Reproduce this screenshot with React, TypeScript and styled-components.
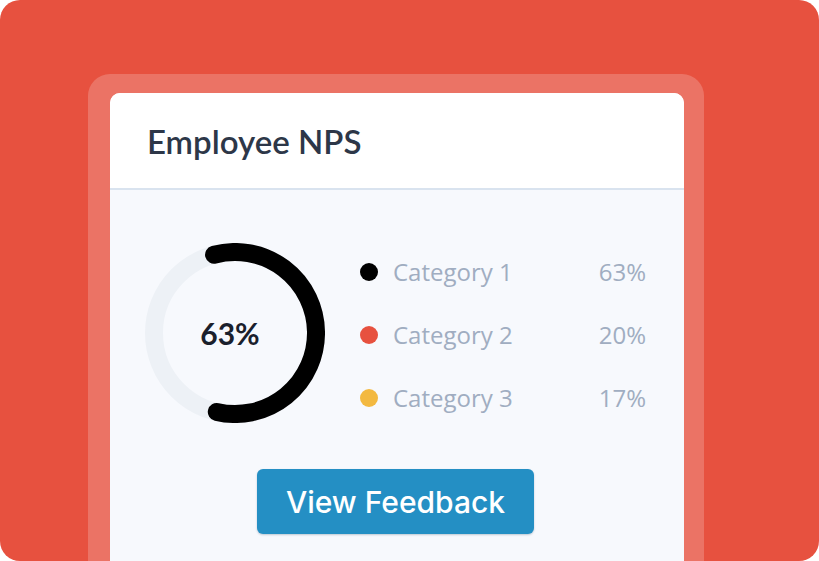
import React from "react";
import styled, { createGlobalStyle } from "styled-components";

const GlobalStyle = createGlobalStyle`
  html, body {
    margin: 0;
    padding: 0;
    background: #ffffff;
  }
`;

const Frame = styled.div`
  width: 819px;
  height: 561px;
  box-sizing: border-box;
  padding: 74px 0 0 88px;
  border-radius: 20px;
  background: #e7513f;
  overflow: hidden;
  display: flex;
`;

const Halo = styled.div`
  width: 616px;
  box-sizing: border-box;
  padding: 19px 20px 0 22px;
  border-radius: 22px 22px 0 0;
  background: rgba(255, 255, 255, 0.2);
  display: flex;
`;

const Card = styled.div`
  flex: 1;
  display: flex;
  flex-direction: column;
  border-radius: 10px 10px 0 0;
  overflow: hidden;
  background: #f7f9fd;
`;

const Header = styled.div`
  height: 95px;
  display: flex;
  align-items: center;
  padding: 0 37px;
  background: #ffffff;
  border-bottom: 2px solid #d9e3ef;
`;

const Title = styled.h2`
  margin: 0;
  font-family: "Lato", "Liberation Sans", sans-serif;
  font-weight: 600;
  font-size: 33px;
  color: #2d3748;
`;

const Body = styled.div`
  display: flex;
  flex-direction: column;
  align-items: center;
  padding: 50px 38px 0 35px;
`;

const ChartRow = styled.div`
  align-self: stretch;
  display: grid;
  grid-template-columns: 180px 1fr;
  column-gap: 35px;
  align-items: start;
`;

const Donut = styled.div`
  position: relative;
  width: 180px;
  height: 180px;
  margin-top: 3px;
`;

const DonutLabel = styled.span`
  position: absolute;
  inset: 0;
  padding-right: 10px;
  display: flex;
  align-items: center;
  justify-content: center;
  font-family: "Lato", "Liberation Sans", sans-serif;
  font-weight: 700;
  font-size: 30px;
  color: #1a202c;
`;

const Legend = styled.ul`
  margin: 0;
  padding: 0;
  list-style: none;
  display: flex;
  flex-direction: column;
`;

const LegendRow = styled.li`
  height: 63px;
  display: flex;
  align-items: center;
  gap: 15px;
  font-family: "Open Sans", "Liberation Sans", sans-serif;
  font-weight: 500;
  font-size: 24px;
  color: #a0adc1;
`;

const Dot = styled.span<{ $color: string }>`
  width: 18px;
  height: 18px;
  border-radius: 50%;
  background: ${(p) => p.$color};
  flex: none;
`;

const Label = styled.span`
  flex: 1;
`;

const Value = styled.span`
  text-align: right;
`;

const Button = styled.button`
  margin-top: 40px;
  width: 277px;
  height: 65px;
  border: none;
  border-radius: 6px;
  background: #248fc4;
  box-shadow: 0 1px 2px rgba(20, 60, 90, 0.25);
  color: #ffffff;
  font-family: "Inter", "Liberation Sans", sans-serif;
  font-weight: 500;
  font-size: 30px;
  cursor: pointer;
`;

const categories = [
  { name: "Category 1", value: "63%", color: "#000000" },
  { name: "Category 2", value: "20%", color: "#e7513f" },
  { name: "Category 3", value: "17%", color: "#f3b940" },
];

const App = () => {
  return (
    <>
      <GlobalStyle />
      <Frame>
        <Halo>
          <Card>
            <Header>
              <Title>Employee NPS</Title>
            </Header>
            <Body>
              <ChartRow>
                <Donut>
                  <svg width="180" height="180" viewBox="0 0 180 180">
                    <circle cx="90" cy="90" r="81" fill="none" stroke="#edf1f6" strokeWidth="18" />
                    <path
                      d="M69.04 11.76 A81 81 0 1 1 71.78 168.92"
                      fill="none"
                      stroke="#000000"
                      strokeWidth="18"
                      strokeLinecap="round"
                    />
                  </svg>
                  <DonutLabel>63%</DonutLabel>
                </Donut>
                <Legend>
                  {categories.map((c) => (
                    <LegendRow key={c.name}>
                      <Dot $color={c.color} />
                      <Label>{c.name}</Label>
                      <Value>{c.value}</Value>
                    </LegendRow>
                  ))}
                </Legend>
              </ChartRow>
              <Button>View Feedback</Button>
            </Body>
          </Card>
        </Halo>
      </Frame>
    </>
  );
};

export default App;
